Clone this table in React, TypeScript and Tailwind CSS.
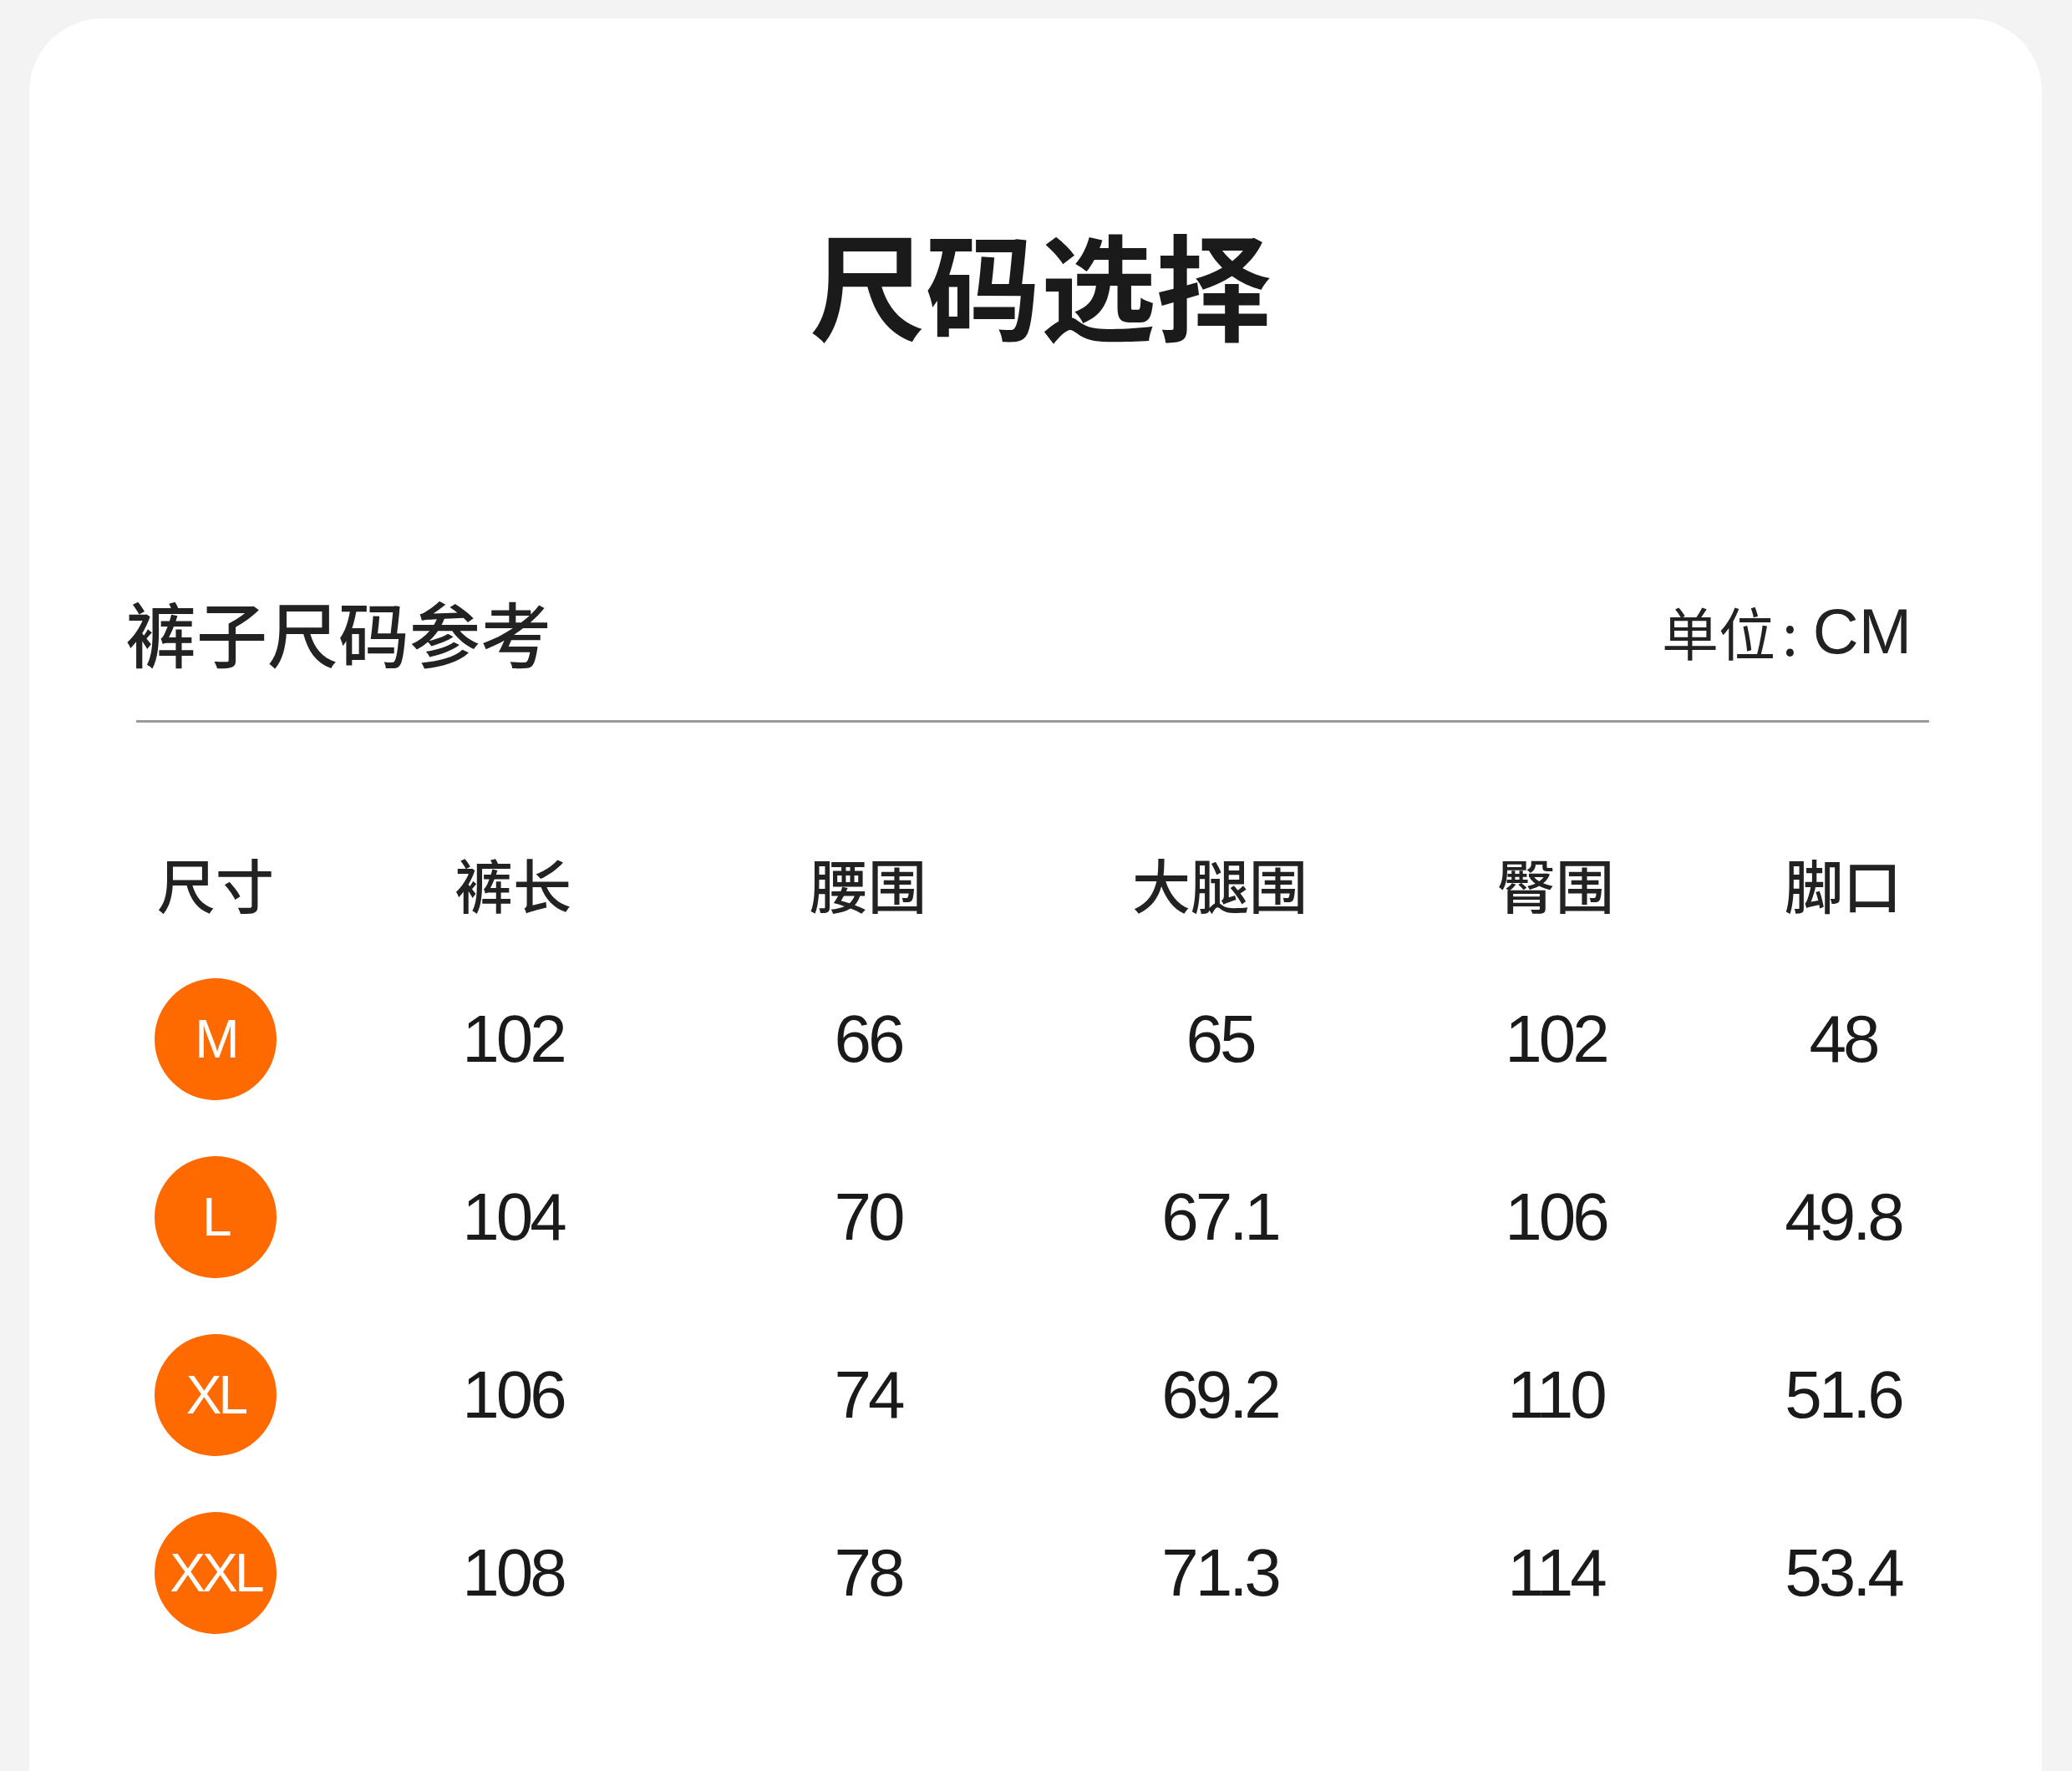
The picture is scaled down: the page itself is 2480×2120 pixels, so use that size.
import React from "react";

const rows = [
  { s: "M", v: ["102", "66", "65", "102", "48"] },
  { s: "L", v: ["104", "70", "67.1", "106", "49.8"] },
  { s: "XL", v: ["106", "74", "69.2", "110", "51.6"] },
  { s: "XXL", v: ["108", "78", "71.3", "114", "53.4"] },
];

const heads = ["尺寸", "裤长", "腰围", "大腿围", "臀围", "脚口"];

const cjk = { fontFamily: '"Noto Sans CJK SC", "Noto Sans", sans-serif' };
const latin = { fontFamily: '"Liberation Sans", Arial, sans-serif' };

export default function App() {
  return (
    <div className="w-[2480px] h-[2120px] bg-[#f3f3f3] pt-[22px] px-[35px] overflow-hidden">
      <div className="w-[2409px] h-[2098px] bg-white rounded-t-[88px] flex flex-col" style={cjk}>
        <h1 className="pt-[246px] text-center text-[138px] leading-none font-bold text-[#1a1a1a] pl-[12px]">
          尺码选择
        </h1>

        <div className="mt-[307px] flex items-center justify-between pl-[115px] pr-[156px]">
          <div className="text-[85px] leading-none font-medium text-[#222]">裤子尺码参考</div>
          <div className="flex items-center text-[68px] leading-none text-[#222]">
            <span>单位</span>
            <span className="ml-[8px] mr-[18px]">:</span>
            <span style={latin} className="text-[76px]">CM</span>
          </div>
        </div>

        <div className="mt-[64px] ml-[128px] mr-[135px] h-[3px] bg-[#9a9a9a]" />

        <div className="mt-[158px] ml-[123px] grid grid-cols-[200px_512px_338px_504px_300px_388px] text-[70px] leading-none font-medium text-[#222]">
          {heads.map((h) => (
            <div key={h} className="text-center">
              {h}
            </div>
          ))}
        </div>

        <div className="mt-[44px] ml-[123px] flex flex-col" style={latin}>
          {rows.map((r) => (
            <div
              key={r.s}
              className="h-[213px] grid grid-cols-[200px_512px_338px_504px_300px_388px] items-center"
            >
              <div className="flex justify-center">
                <div className="w-[146px] h-[146px] rounded-full bg-[#ff6a00] flex items-center justify-center text-white text-[64px] leading-none tracking-[-0.06em]">
                  {r.s}
                </div>
              </div>
              {r.v.map((x, i) => (
                <div key={i} className="text-center text-[80px] leading-none text-[#1a1a1a] tracking-[-0.05em]">
                  {x}
                </div>
              ))}
            </div>
          ))}
        </div>
      </div>
    </div>
  );
}
